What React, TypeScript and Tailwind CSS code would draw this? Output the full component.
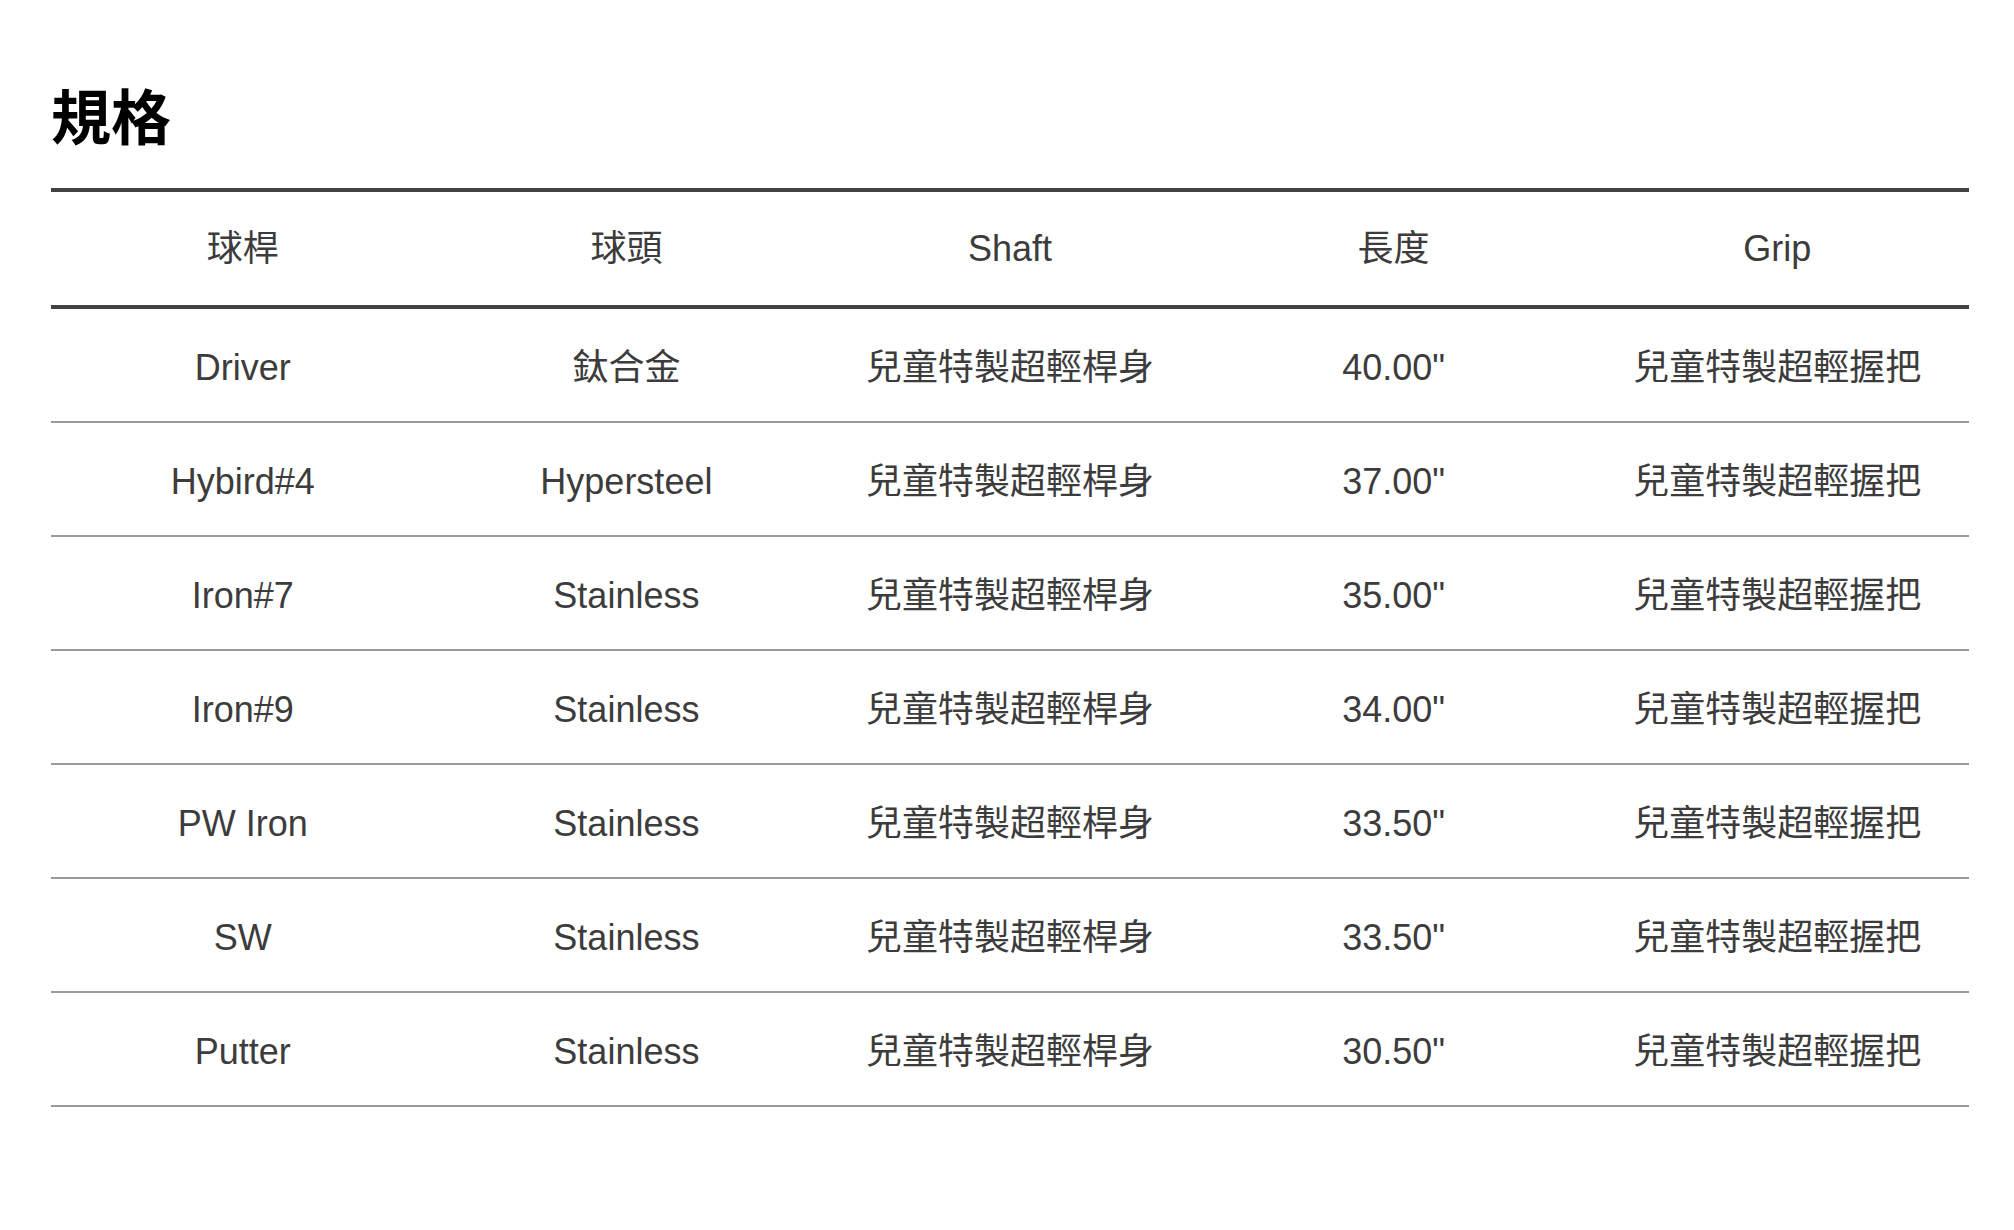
import React from "react";

const rows = [
  ["Driver", "鈦合金", "兒童特製超輕桿身", "40.00\"", "兒童特製超輕握把"],
  ["Hybird#4", "Hypersteel", "兒童特製超輕桿身", "37.00\"", "兒童特製超輕握把"],
  ["Iron#7", "Stainless", "兒童特製超輕桿身", "35.00\"", "兒童特製超輕握把"],
  ["Iron#9", "Stainless", "兒童特製超輕桿身", "34.00\"", "兒童特製超輕握把"],
  ["PW Iron", "Stainless", "兒童特製超輕桿身", "33.50\"", "兒童特製超輕握把"],
  ["SW", "Stainless", "兒童特製超輕桿身", "33.50\"", "兒童特製超輕握把"],
  ["Putter", "Stainless", "兒童特製超輕桿身", "30.50\"", "兒童特製超輕握把"],
];

const headers = ["球桿", "球頭", "Shaft", "長度", "Grip"];

export default function App() {
  return (
    <div
      className="min-h-[1230px] w-full bg-white pt-[90px]"
      style={{ fontFamily: '"Liberation Sans", "Noto Sans CJK TC", sans-serif' }}
    >
      <div className="ml-[51px] w-[1918px]">
        <h1 className="text-[60px] font-bold leading-[60px] text-black">規格</h1>
        <div className="mt-[38px]">
          <div className="grid h-[121px] grid-cols-5 items-center border-y-4 border-[#424242] text-[36px] text-[#3c3c3c]">
            {headers.map((h) => (
              <div key={h} className="text-center">
                {h}
              </div>
            ))}
          </div>
          {rows.map((r, i) => (
            <div
              key={i}
              className="grid h-[114px] grid-cols-5 items-center border-b-2 border-[#9a9a9a] pt-[5px] text-[36px] text-[#3c3c3c]"
            >
              {r.map((c, j) => (
                <div key={j} className="text-center">
                  {c}
                </div>
              ))}
            </div>
          ))}
        </div>
      </div>
    </div>
  );
}
